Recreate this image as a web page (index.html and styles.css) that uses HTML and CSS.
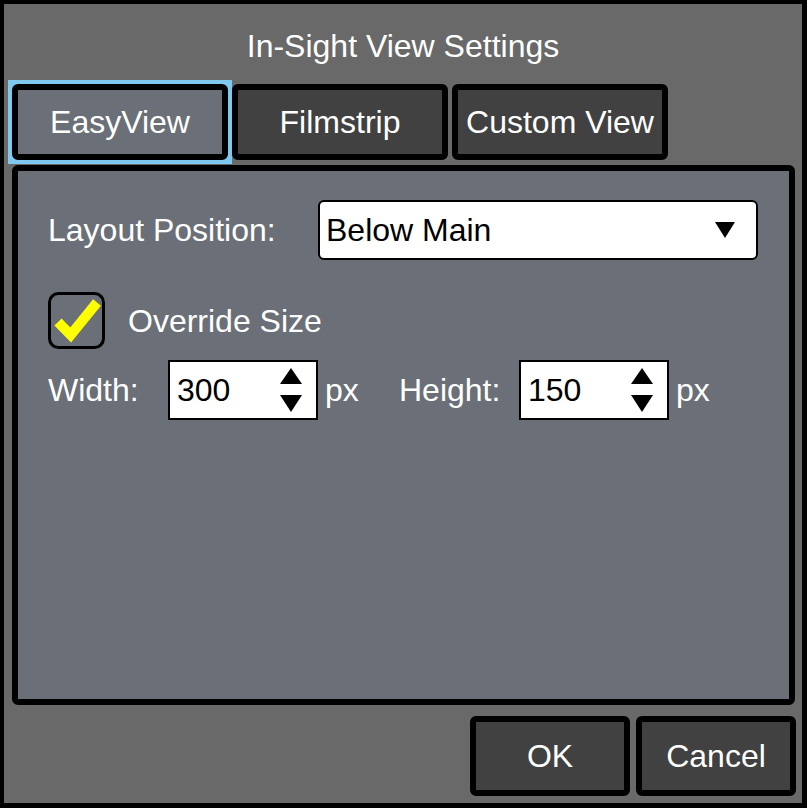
FILE: index.html
```html
<!DOCTYPE html>
<html>
<head>
<meta charset="utf-8">
<link rel="stylesheet" href="styles.css">
</head>
<body>
<div class="title">In-Sight View Settings</div>
<div class="tabs">
  <div class="tab-focus"><div class="tab active">EasyView</div></div>
  <div class="tab">Filmstrip</div>
  <div class="tab">Custom View</div>
</div>
<div class="panel">
  <div class="row">
    <div class="label-main">Layout Position:</div>
    <div class="select">
      <span>Below Main</span>
      <svg class="select-arrow" width="20" height="16" viewBox="0 0 20 16"><polygon points="0,0 20,0 10,16" fill="#000"/></svg>
    </div>
  </div>
  <div class="row check-row">
    <svg class="checkbox" width="57" height="57" viewBox="0 0 57 57">
      <rect x="1.5" y="1.5" width="54" height="54" rx="9" ry="9" fill="none" stroke="#000" stroke-width="3"/>
      <polyline points="10,30 22.7,43 49,10.5" fill="none" stroke="#ffff00" stroke-width="10" stroke-linejoin="miter"/>
    </svg>
    <span class="check-label">Override Size</span>
  </div>
  <div class="row size-row">
    <div class="label-size">Width:</div>
    <div class="num-input">
      <span>300</span>
      <svg class="spinner" width="22" height="44" viewBox="0 0 22 44"><polygon points="11,0 22,16 0,16" fill="#000"/><polygon points="0,27 22,27 11,44" fill="#000"/></svg>
    </div>
    <div class="unit">px</div>
    <div class="label-size">Height:</div>
    <div class="num-input">
      <span>150</span>
      <svg class="spinner" width="22" height="44" viewBox="0 0 22 44"><polygon points="11,0 22,16 0,16" fill="#000"/><polygon points="0,27 22,27 11,44" fill="#000"/></svg>
    </div>
    <div class="unit">px</div>
  </div>
</div>
<div class="buttons">
  <div class="btn">OK</div>
  <div class="btn">Cancel</div>
</div>
</body>
</html>
```

FILE: styles.css
```css
html, body {
  margin: 0;
  padding: 0;
}
body {
  width: 807px;
  height: 808px;
  box-sizing: border-box;
  border-style: solid;
  border-color: #000;
  border-width: 4px 5px 5px 4px;
  background: #696969;
  font-family: "Liberation Sans", Arial, sans-serif;
  font-size: 32px;
  color: #fff;
  overflow: hidden;
}
.title {
  margin-top: 24px;
  height: 36px;
  line-height: 36px;
  text-align: center;
}
.tabs {
  margin-top: 16px;
  padding-left: 4px;
  display: flex;
  align-items: flex-start;
  height: 84px;
}
.tab-focus {
  padding: 4px;
  background: #80c8f0;
}
.tab {
  width: 216px;
  height: 76px;
  box-sizing: border-box;
  border: 6px solid #000;
  border-radius: 6px;
  background: #414141;
  display: flex;
  align-items: center;
  justify-content: center;
  line-height: 36px;
  margin-top: 4px;
  margin-left: 4px;
}
.tab.active {
  background: #6b6f77;
  margin: 0;
}
.tab-focus + .tab {
  margin-left: 0;
}
.panel {
  margin: 1px 7px 0 8px;
  height: 540px;
  box-sizing: border-box;
  border: 6px solid #000;
  border-radius: 6px;
  background: #6b6f77;
  padding: 29px 30px;
}
.row {
  display: flex;
  align-items: center;
  line-height: 36px;
}
.label-main {
  width: 270px;
}
.select {
  width: 440px;
  height: 60px;
  box-sizing: border-box;
  border: 2px solid #000;
  border-radius: 6px;
  background: #fff;
  color: #000;
  display: flex;
  align-items: center;
  justify-content: space-between;
  padding: 0 21px 0 6px;
}
.check-row {
  margin-top: 32px;
}
.checkbox {
  display: block;
  margin-right: 23px;
}
.size-row {
  margin-top: 11px;
}
.label-size {
  width: 120px;
}
.num-input {
  width: 150px;
  height: 60px;
  box-sizing: border-box;
  border: 2px solid #000;
  background: #fff;
  color: #000;
  display: flex;
  align-items: center;
  padding: 0 14px 0 7px;
}
.spinner {
  display: block;
  margin-left: auto;
}
.unit {
  width: 74px;
  margin-left: 7px;
}
.buttons {
  display: flex;
  justify-content: flex-end;
  gap: 6px;
  margin: 11px 6px 0 0;
}
.btn {
  width: 160px;
  height: 80px;
  box-sizing: border-box;
  border: 6px solid #000;
  border-radius: 6px;
  background: #414141;
  display: flex;
  align-items: center;
  justify-content: center;
  line-height: 36px;
}
```
